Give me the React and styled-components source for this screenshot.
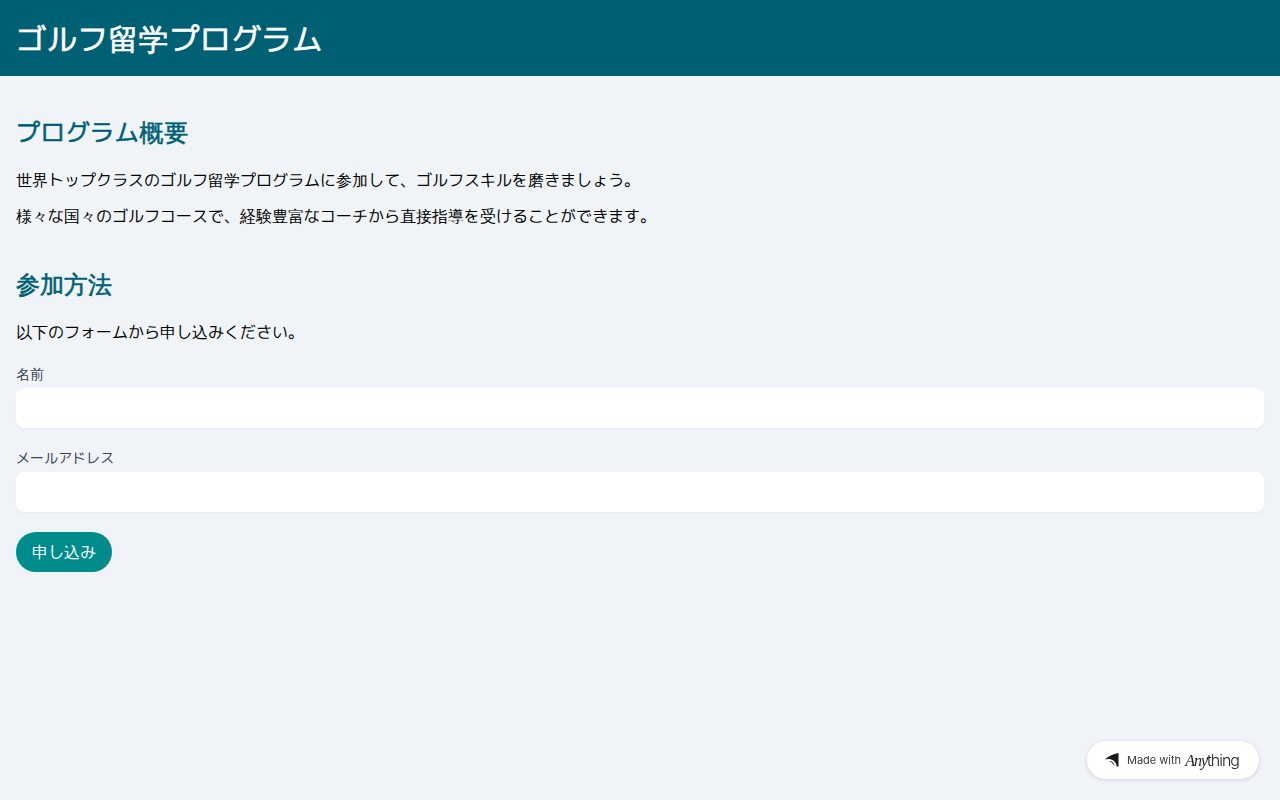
import React from "react";
import styled, { createGlobalStyle } from "styled-components";

const GlobalStyle = createGlobalStyle`
  html, body {
    margin: 0;
    padding: 0;
    min-height: 100%;
    background: #f0f4f8;
    font-family: "Liberation Sans", "WenQuanYi Zen Hei Mono", "Noto Sans CJK JP", sans-serif;
  }
  * {
    box-sizing: border-box;
  }
`;

const Page = styled.div`
  min-height: 800px;
  display: flex;
  flex-direction: column;
`;

const Header = styled.header`
  height: 76px;
  background: #006073;
  color: #fff;
  padding: 18px 16px 14px;
  display: flex;
  align-items: center;
`;

const Title = styled.h1`
  margin: 0;
  font-size: 30px;
  line-height: 44px;
  font-weight: 700;
  letter-spacing: 0.7px;
  -webkit-text-stroke: 0.7px #fff;
`;

const Main = styled.main`
  padding: 38px 16px 16px;
`;

const Section = styled.section`
  margin-bottom: 38px;
`;

const Heading = styled.h2`
  margin: 0 0 18px;
  padding-top: 1px;
  height: 36px;
  font-size: 24px;
  line-height: 36px;
  font-weight: 700;
  color: #006073;
  letter-spacing: ${(p) => p.$spacing || 0}px;
  -webkit-text-stroke: 0.6px #006073;
`;

const Text = styled.p`
  margin: 0 0 12px;
  padding-top: 1px;
  height: 24px;
  font-size: 16px;
  line-height: 24px;
  color: #000;
`;

const Form = styled.form`
  margin-top: 20px;
`;

const Field = styled.div`
  margin-bottom: 20px;
`;

const Label = styled.label`
  display: block;
  margin-bottom: 4px;
  font-size: 14px;
  line-height: 20px;
  color: #374151;
`;

const Input = styled.input`
  display: block;
  width: 100%;
  height: 40px;
  border: none;
  border-radius: 8px;
  background: #fff;
  box-shadow: 0 1px 2px rgba(0, 0, 0, 0.05);
  padding: 8px 16px;
  font-size: 16px;
`;

const Button = styled.button`
  height: 40px;
  padding: 2px 16px 0;
  border: none;
  border-radius: 20px;
  background: #008c8c;
  color: #fff;
  font-family: inherit;
  font-size: 16px;
`;

const Badge = styled.a`
  position: fixed;
  right: 21px;
  bottom: 21px;
  height: 38px;
  width: 172px;
  padding-left: 18px;
  display: flex;
  align-items: center;
  background: #fff;
  border-radius: 19px;
  box-shadow: 0 1px 4px rgba(0, 0, 0, 0.14);
  color: #3a3a3a;
  font-family: Inter, sans-serif;
  font-size: 11px;
`;

const BadgeLabel = styled.span`
  margin: 0 4px 0 8px;
  white-space: nowrap;
`;

const Brand = styled.span`
  display: inline-flex;
  align-items: baseline;
  color: #222;
  font-size: 16px;
  font-weight: 300;
  letter-spacing: -1px;
`;

const BrandItalic = styled.span`
  font-family: "Liberation Serif", serif;
  font-style: italic;
`;

const BadgeIcon = () => (
  <svg width="14" height="14" viewBox="0 0 14 14">
    <path d="M0 6.5 C3 3.5 8 0.8 13.5 0 L13.5 13.5 L11.6 13.5 C11.6 10 9 7 5.5 6.2 C3.6 5.8 1.8 6 0 6.5Z" fill="#1a1a1a" />
    <path d="M3.5 8 C6.5 7.6 9.2 9.6 9.8 13 C8.4 10.8 6.4 8.9 3.5 8Z" fill="#1a1a1a" />
  </svg>
);

export default function App() {
  return (
    <Page>
      <GlobalStyle />
      <Header>
        <Title>ゴルフ留学プログラム</Title>
      </Header>
      <Main>
        <Section>
          <Heading $spacing={0.7}>プログラム概要</Heading>
          <Text>世界トップクラスのゴルフ留学プログラムに参加して、ゴルフスキルを磨きましょう。</Text>
          <Text>様々な国々のゴルフコースで、経験豊富なコーチから直接指導を受けることができます。</Text>
        </Section>
        <Section>
          <Heading>参加方法</Heading>
          <Text>以下のフォームから申し込みください。</Text>
          <Form>
            <Field>
              <Label htmlFor="name">名前</Label>
              <Input id="name" type="text" />
            </Field>
            <Field>
              <Label htmlFor="email">メールアドレス</Label>
              <Input id="email" type="email" />
            </Field>
            <Button type="button">申し込み</Button>
          </Form>
        </Section>
      </Main>
      <Badge>
        <BadgeIcon />
        <BadgeLabel>Made with</BadgeLabel>
        <Brand>
          <BrandItalic>Any</BrandItalic>thing
        </Brand>
      </Badge>
    </Page>
  );
}
